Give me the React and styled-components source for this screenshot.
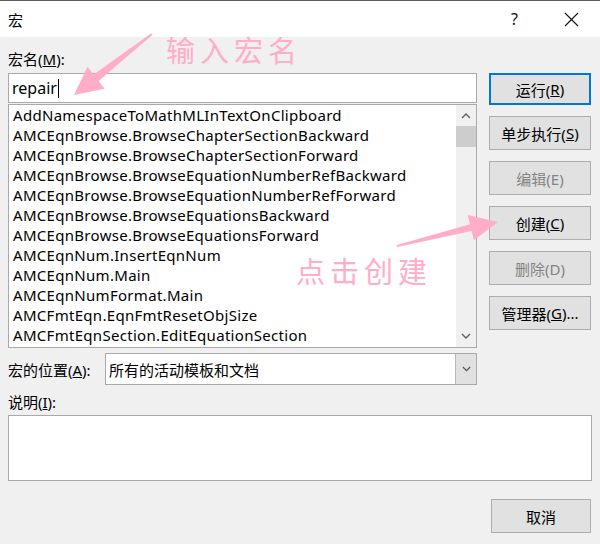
import React from 'react';
import styled, { createGlobalStyle } from 'styled-components';

const Global = createGlobalStyle`
  html, body { margin: 0; padding: 0; background: #f0f0f0; }
`;

const Window = styled.div`
  position: relative;
  width: 600px;
  height: 544px;
  box-sizing: border-box;
  overflow: hidden;
  background: #f0f0f0;
  border-top: 1px solid #5c5c5c;
  font-family: "Noto Sans", "Noto Sans CJK SC", sans-serif;
  font-size: 15px;
  color: #000;
  display: flex;
  flex-direction: column;
`;

const TitleBar = styled.div`
  height: 36px;
  flex: none;
  background: #fff;
  display: flex;
  align-items: center;
  padding-left: 8px;
`;

const Title = styled.div`
  flex: 1;
  font-size: 15px;
`;

const TitleButton = styled.div`
  width: 57px;
  height: 36px;
  display: flex;
  align-items: center;
  justify-content: center;
  font-size: 16px;
  color: #111;
`;

const Body = styled.div`
  flex: 1;
  display: flex;
  flex-direction: column;
  padding: 0 8px;
`;

const MainRow = styled.div`
  display: flex;
  gap: 12px;
`;

const LeftCol = styled.div`
  width: 469px;
  display: flex;
  flex-direction: column;
`;

const RightCol = styled.div`
  width: 102px;
  padding-top: 36px;
  display: flex;
  flex-direction: column;
  gap: 11px;
`;

const Label = styled.div`
  height: 20px;
  line-height: 20px;
  margin-top: ${p => p.$top || 0}px;
  white-space: nowrap;
`;

const Input = styled.div`
  margin-top: 4px;
  height: 30px;
  box-sizing: border-box;
  border: 1px solid #a9a9a9;
  background: #fff;
  display: flex;
  align-items: center;
  padding-left: 3px;
  font-size: 16px;
`;

const Caret = styled.span`
  display: inline-block;
  width: 1px;
  height: 19px;
  background: #000;
  margin-left: 1px;
`;

const List = styled.div`
  margin-top: 1px;
  height: 244px;
  box-sizing: border-box;
  border: 1px solid #a9a9a9;
  background: #fff;
  display: flex;
`;

const Items = styled.div`
  flex: 1;
  padding: 0 0 0 4px;
  overflow: hidden;
`;

const Item = styled.div`
  height: 20px;
  line-height: 20px;
  white-space: nowrap;
  letter-spacing: 0.3px;
`;

const ScrollBar = styled.div`
  width: 20px;
  background: #f0f0f0;
  display: flex;
  flex-direction: column;
`;

const ScrollArrow = styled.div`
  height: 21px;
  display: flex;
  align-items: center;
  justify-content: center;
`;

const ScrollTrack = styled.div`
  flex: 1;
`;

const Thumb = styled.div`
  height: 21px;
  background: #cdcdcd;
`;

const LocationRow = styled.div`
  margin-top: 5px;
  height: 32px;
  display: flex;
  align-items: center;
`;

const LocationLabel = styled.div`
  width: 97px;
  white-space: nowrap;
`;

const Combo = styled.div`
  flex: 1;
  height: 32px;
  box-sizing: border-box;
  border: 1px solid #a9a9a9;
  background: #fff;
  display: flex;
`;

const ComboText = styled.div`
  flex: 1;
  display: flex;
  align-items: center;
  padding-left: 3px;
`;

const ComboButton = styled.div`
  width: 20px;
  background: #e1e1e1;
  border-left: 1px solid #b9b9b9;
  display: flex;
  align-items: center;
  justify-content: center;
`;

const Button = styled.div`
  height: ${p => (p.$default ? 32 : 34)}px;
  box-sizing: border-box;
  background: #e1e1e1;
  border: ${p => (p.$default ? '2px solid #0078d7' : '1px solid #adadad')};
  display: flex;
  align-items: center;
  justify-content: center;
  color: ${p => (p.$disabled ? '#838383' : '#000')};
  white-space: nowrap;
`;

const DescBox = styled.div`
  margin-top: 3px;
  height: 66px;
  box-sizing: border-box;
  border: 1px solid #a9a9a9;
  background: #fff;
`;

const Footer = styled.div`
  margin-top: 18px;
  display: flex;
  justify-content: flex-end;
  padding-right: 1px;
`;

const CancelButton = styled(Button)`
  width: 100px;
`;

const Overlay = styled.svg`
  position: absolute;
  left: 0;
  top: 0;
  pointer-events: none;
`;

const Note = styled.div`
  position: absolute;
  left: ${p => p.$x}px;
  top: ${p => p.$y}px;
  font-family: "Noto Sans CJK SC", sans-serif;
  font-weight: 400;
  font-size: 29px;
  line-height: 30px;
  letter-spacing: 5px;
  color: #ffadc9;
  white-space: nowrap;
`;

const macros = [
  'AddNamespaceToMathMLInTextOnClipboard',
  'AMCEqnBrowse.BrowseChapterSectionBackward',
  'AMCEqnBrowse.BrowseChapterSectionForward',
  'AMCEqnBrowse.BrowseEquationNumberRefBackward',
  'AMCEqnBrowse.BrowseEquationNumberRefForward',
  'AMCEqnBrowse.BrowseEquationsBackward',
  'AMCEqnBrowse.BrowseEquationsForward',
  'AMCEqnNum.InsertEqnNum',
  'AMCEqnNum.Main',
  'AMCEqnNumFormat.Main',
  'AMCFmtEqn.EqnFmtResetObjSize',
  'AMCFmtEqnSection.EditEquationSection',
];

const Chevron = ({ up, size = 10, color = '#606060' }) => (
  <svg width={size} height={size / 2 + 2} viewBox="0 0 10 7">
    <polyline
      points={up ? '1,6 5,2 9,6' : '1,1 5,5 9,1'}
      fill="none"
      stroke={color}
      strokeWidth="1.4"
    />
  </svg>
);

export default function App() {
  return (
    <>
      <Global />
      <Window>
        <TitleBar>
          <Title>宏</Title>
          <TitleButton>?</TitleButton>
          <TitleButton>
            <svg width="15" height="15" viewBox="0 0 15 15">
              <path d="M1 1 L14 14 M14 1 L1 14" stroke="#111" strokeWidth="1.1" />
            </svg>
          </TitleButton>
        </TitleBar>
        <Body>
          <MainRow>
            <LeftCol>
              <Label $top={12}>宏名(<u>M</u>):</Label>
              <Input>
                repair<Caret />
              </Input>
              <List>
                <Items>
                  {macros.map(m => (
                    <Item key={m}>{m}</Item>
                  ))}
                </Items>
                <ScrollBar>
                  <ScrollArrow><Chevron up /></ScrollArrow>
                  <Thumb />
                  <ScrollTrack />
                  <ScrollArrow><Chevron /></ScrollArrow>
                </ScrollBar>
              </List>
              <LocationRow>
                <LocationLabel>宏的位置(<u>A</u>):</LocationLabel>
                <Combo>
                  <ComboText>所有的活动模板和文档</ComboText>
                  <ComboButton><Chevron size={9} color="#555" /></ComboButton>
                </Combo>
              </LocationRow>
            </LeftCol>
            <RightCol>
              <Button $default>运行(<u>R</u>)</Button>
              <Button>单步执行(<u>S</u>)</Button>
              <Button $disabled>编辑(E)</Button>
              <Button>创建(<u>C</u>)</Button>
              <Button $disabled>删除(D)</Button>
              <Button>管理器(<u>G</u>)...</Button>
            </RightCol>
          </MainRow>
          <Label $top={7}>说明(<u>I</u>):</Label>
          <DescBox />
          <Footer>
            <CancelButton>取消</CancelButton>
          </Footer>
        </Body>

        <Overlay width="600" height="544" viewBox="0 0 600 544">
          <polygon
            fill="#ffadc9"
            points="151.4,32.2 93.6,73.6 87.5,65.8 74,94 104.7,87.8 98.6,80 152.6,33.8"
          />
          <polygon
            fill="#ffadc9"
            points="396.8,244 470,223.3 467.7,214.1 498,221 473.9,239.3 471.6,230.1 397.2,246"
          />
        </Overlay>
        <Note $x={166} $y={33}>输入宏名</Note>
        <Note $x={296} $y={254}>点击创建</Note>
      </Window>
    </>
  );
}
